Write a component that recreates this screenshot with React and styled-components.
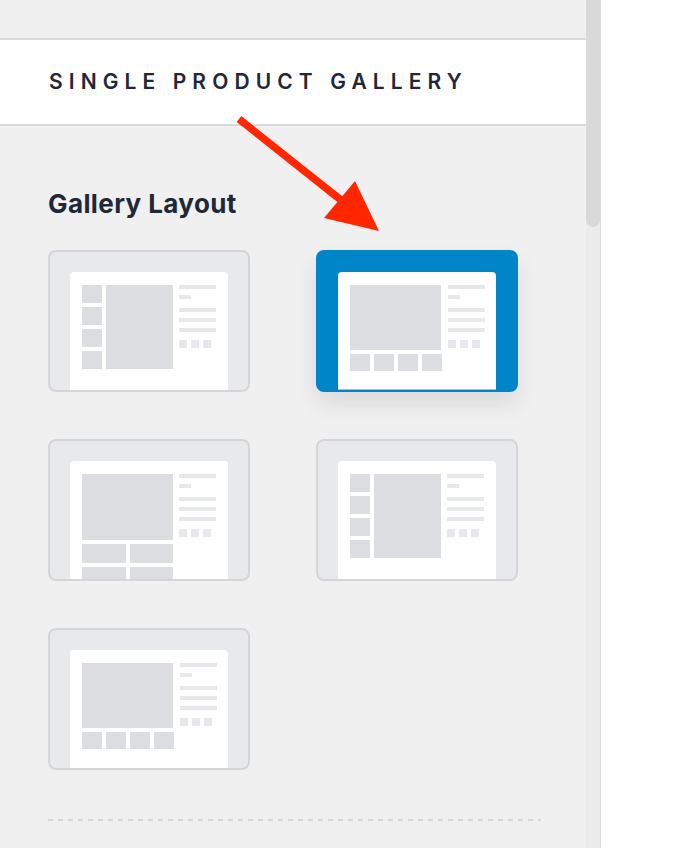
import React from "react";
import styled, { createGlobalStyle, css } from "styled-components";

const GlobalStyle = createGlobalStyle`
  html, body {
    margin: 0;
    padding: 0;
    background: #ffffff;
  }
  body {
    font-family: Inter, "Noto Sans", "Liberation Sans", sans-serif;
  }
`;

const Page = styled.div`
  display: flex;
  height: 848px;
  overflow: hidden;
  background: #ffffff;
`;

const Panel = styled.div`
  position: relative;
  width: 586px;
  flex-shrink: 0;
  background: #f0f0f0;
  display: flex;
  flex-direction: column;
`;

const TopGap = styled.div`
  height: 38px;
  flex-shrink: 0;
`;

const SectionHeader = styled.div`
  height: 84px;
  flex-shrink: 0;
  display: flex;
  align-items: center;
  padding-left: 49px;
  background: #ffffff;
  border-top: 2px solid #d6d9dd;
  border-bottom: 2px solid #d6d9dd;
`;

const SectionTitle = styled.h2`
  margin: 0;
  font-size: 21px;
  line-height: 24px;
  font-weight: 600;
  letter-spacing: 6.1px;
  color: #1f2838;
  text-transform: uppercase;
`;

const Body = styled.div`
  padding: 62px 48px 0;
`;

const GroupTitle = styled.h3`
  margin: 0 0 30px;
  font-size: 26px;
  line-height: 32px;
  font-weight: 700;
  letter-spacing: 0.4px;
  color: #1f2838;
`;

const LayoutGrid = styled.div`
  display: grid;
  grid-template-columns: 202px 202px;
  column-gap: 66px;
  row-gap: 47px;
`;

const LayoutCard = styled.div`
  box-sizing: border-box;
  width: 202px;
  height: 142px;
  padding: 20px 20px 0;
  border-radius: 8px;
  overflow: hidden;
  cursor: pointer;
  background: #e8e9eb;
  border: 2px solid #d3d5d9;
  ${(p) =>
    p.$active &&
    css`
      background: #0085c9;
      border-color: #0085c9;
      box-shadow: 0 12px 22px rgba(0, 0, 0, 0.09);
    `}
`;

const Sheet = styled.div`
  height: 100%;
  box-sizing: border-box;
  background: #ffffff;
  border-radius: 4px 4px 0 0;
  padding: 13px 12px 0;
  display: flex;
  gap: 6px;
  ${(p) =>
    p.$active &&
    css`
      border-bottom: 1px solid #8cc9ea;
    `}
`;

const Gallery = styled.div`
  display: flex;
  flex-direction: ${(p) => (p.$side ? "row" : "column")};
  gap: 4px;
`;

const Block = styled.div`
  background: #dcdde1;
  flex-shrink: 0;
  width: ${(p) => p.$w}px;
  height: ${(p) => p.$h}px;
`;

const ThumbStack = styled.div`
  display: flex;
  flex-direction: ${(p) => (p.$col ? "column" : "row")};
  gap: 4px;
`;

const ThumbGrid = styled.div`
  display: grid;
  grid-template-columns: 43.5px 43.5px;
  grid-auto-rows: 19px;
  gap: 4px;
`;

const Info = styled.div`
  display: flex;
  flex-direction: column;
  width: 37px;
`;

const Line = styled.div`
  height: 4px;
  width: ${(p) => p.$w || 37}px;
  margin-top: ${(p) => p.$mt || 0}px;
  background: #e7e8eb;
`;

const Swatches = styled.div`
  display: flex;
  gap: 4px;
  margin-top: 8px;
`;

const Swatch = styled.div`
  width: 8px;
  height: 8px;
  background: #e7e8eb;
`;

const Divider = styled.div`
  margin-top: 49px;
  width: 493px;
  height: 2px;
  background: repeating-linear-gradient(
    to right,
    #d5d6da 0 5px,
    transparent 5px 10px
  );
`;

const Scrollbar = styled.div`
  width: 14px;
  flex-shrink: 0;
  background: #ececec;
  border-right: 1px solid #d9d9d9;
`;

const Thumb = styled.div`
  height: 227px;
  background: #d9d9d9;
  border-radius: 0 0 7px 7px;
`;

const ArrowLayer = styled.svg`
  position: absolute;
  left: 0;
  top: 0;
  pointer-events: none;
`;

const Info5 = () => (
  <Info>
    <Line />
    <Line $w={12} $mt={6} />
    <Line $mt={9} />
    <Line $mt={6} />
    <Line $mt={6} />
    <Swatches>
      <Swatch />
      <Swatch />
      <Swatch />
    </Swatches>
  </Info>
);

const Preview = ({ type }) => {
  if (type === "left") {
    return (
      <>
        <Gallery $side>
          <ThumbStack $col>
            {[0, 1, 2, 3].map((i) => (
              <Block key={i} $w={20} $h={18} />
            ))}
          </ThumbStack>
          <Block $w={67} $h={84} />
        </Gallery>
        <Info5 />
      </>
    );
  }
  if (type === "grid") {
    return (
      <>
        <Gallery>
          <Block $w={91} $h={66} />
          <ThumbGrid>
            {[0, 1, 2, 3].map((i) => (
              <Block key={i} $w={43.5} $h={19} />
            ))}
          </ThumbGrid>
        </Gallery>
        <Info5 />
      </>
    );
  }
  return (
    <>
      <Gallery>
        <Block $w={91} $h={65} />
        <ThumbStack>
          {[0, 1, 2, 3].map((i) => (
            <Block key={i} $w={20} $h={17} />
          ))}
        </ThumbStack>
      </Gallery>
      <Info5 />
    </>
  );
};

const layouts = [
  { id: "vertical-left", type: "left" },
  { id: "horizontal", type: "bottom", active: true },
  { id: "grid", type: "grid" },
  { id: "vertical-left-2", type: "left" },
  { id: "horizontal-2", type: "bottom" },
];

export default function App() {
  return (
    <>
      <GlobalStyle />
      <Page>
        <Panel>
          <TopGap />
          <SectionHeader>
            <SectionTitle>Single Product Gallery</SectionTitle>
          </SectionHeader>
          <Body>
            <GroupTitle>Gallery Layout</GroupTitle>
            <LayoutGrid>
              {layouts.map((l) => (
                <LayoutCard key={l.id} $active={l.active}>
                  <Sheet $active={l.active}>
                    <Preview type={l.type} />
                  </Sheet>
                </LayoutCard>
              ))}
            </LayoutGrid>
            <Divider />
          </Body>
          <ArrowLayer width="586" height="848" viewBox="0 0 586 848">
            <line
              x1="239"
              y1="119"
              x2="346"
              y2="204"
              stroke="#ff2600"
              strokeWidth="7.5"
            />
            <polygon points="355,181 324,218 379,231" fill="#ff2600" />
          </ArrowLayer>
        </Panel>
        <Scrollbar>
          <Thumb />
        </Scrollbar>
      </Page>
    </>
  );
}
